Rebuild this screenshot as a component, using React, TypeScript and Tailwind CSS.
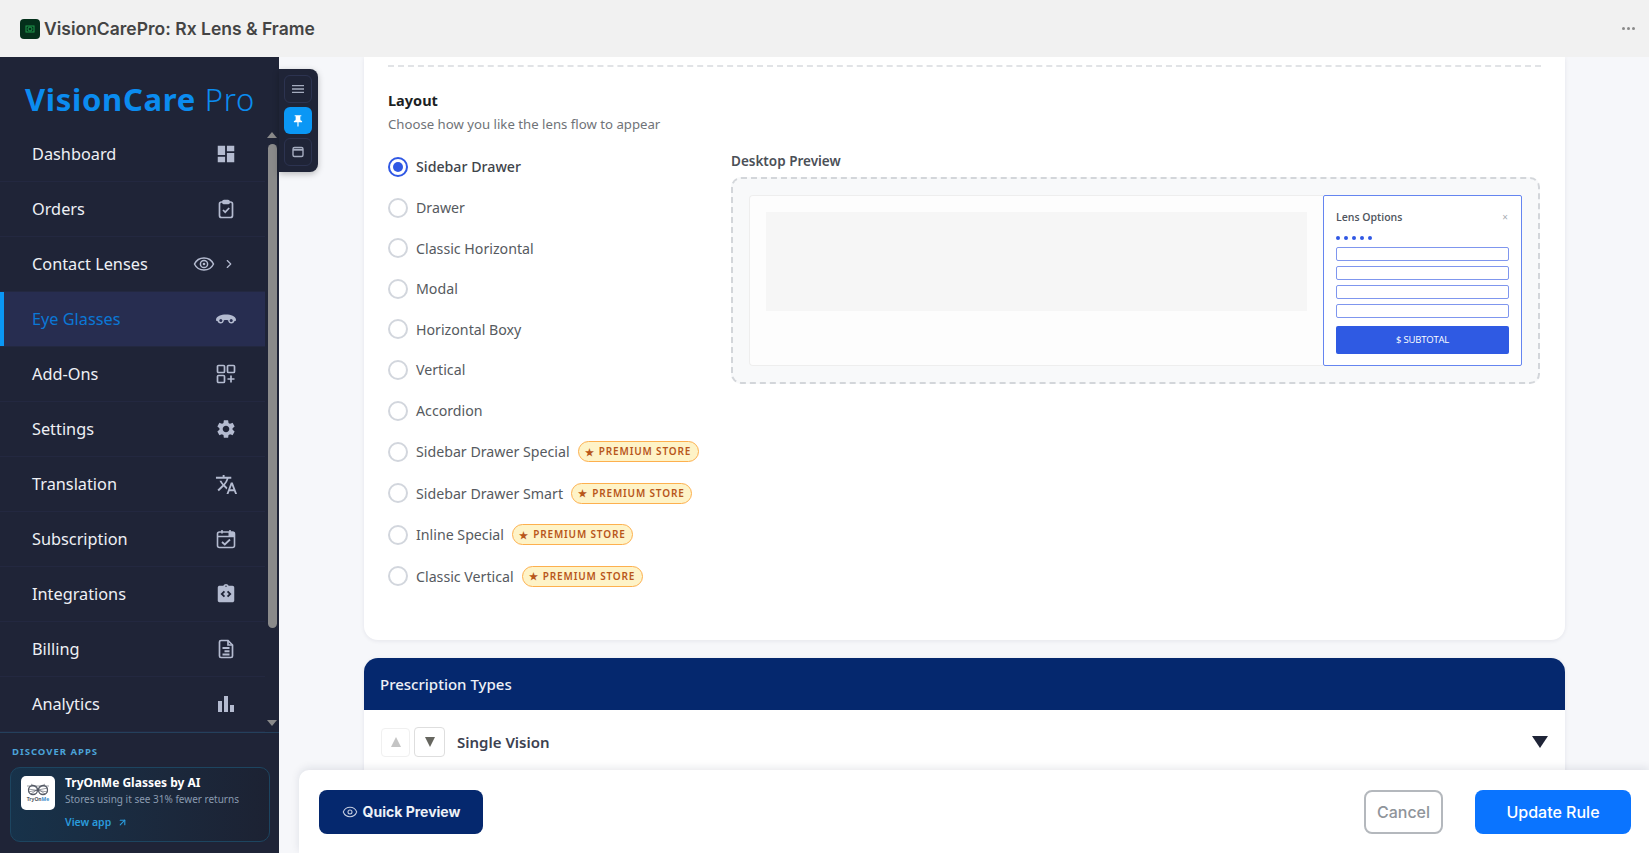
import React from 'react';
import { ChevronRight, Eye, ArrowUpRight } from 'lucide-react';
import { MdDashboard, MdSettings, MdTranslate, MdBarChart, MdPushPin, MdIntegrationInstructions, MdMenu } from 'react-icons/md';

// Icons that the packages do not have in the right shape
const ClipboardIcon = () => (
  <svg width="20" height="20" viewBox="0 0 20 20" fill="none" stroke="currentColor" strokeWidth="1.7">
    <rect x="3.5" y="3" width="13" height="15.5" rx="2" />
    <rect x="7" y="1.5" width="6" height="3" rx="1" fill="currentColor" />
    <path d="M7 11l2.2 2.2L13.2 9" />
  </svg>
);

const RingEyeIcon = () => (
  <svg width="22" height="22" viewBox="0 0 22 22" fill="none" stroke="currentColor" strokeWidth="1.5">
    <path d="M1.5 11C3.5 6.8 7 5 11 5s7.5 1.8 9.5 6c-2 4.2-5.5 6-9.5 6s-7.5-1.8-9.5-6z" />
    <circle cx="11" cy="11" r="3.6" />
    <circle cx="11" cy="11" r="1.3" fill="currentColor" stroke="none" />
  </svg>
);

const GlassesIcon = () => (
  <svg width="22" height="22" viewBox="0 0 22 22" fill="currentColor">
    <path d="M1 11.5C1.5 8 6 6.5 11 6.5s9.5 1.5 10 5l-.3 1.5h-1.2c-.3 1.5-1.5 2.5-3 2.5-1.8 0-3.2-1.2-3.3-3-.8-.6-3.6-.6-4.4 0-.1 1.8-1.5 3-3.3 3-1.5 0-2.7-1-3-2.5H1.3z" />
    <circle cx="5.8" cy="12.5" r="1.5" fill="#272d50" />
    <circle cx="16.2" cy="12.5" r="1.5" fill="#272d50" />
  </svg>
);

const AddOnsIcon = () => (
  <svg width="20" height="20" viewBox="0 0 20 20" fill="none" stroke="currentColor" strokeWidth="1.7">
    <rect x="1.5" y="1.5" width="7" height="7" rx="1" />
    <rect x="11.5" y="1.5" width="7" height="7" rx="1" />
    <rect x="1.5" y="11.5" width="7" height="7" rx="1" />
    <path d="M15 11.5v7M11.5 15h7" />
  </svg>
);

const CalendarIcon = () => (
  <svg width="20" height="20" viewBox="0 0 20 20" fill="none" stroke="currentColor" strokeWidth="1.6">
    <rect x="1.5" y="3" width="17" height="15.5" rx="2" />
    <path d="M1.5 7.5h17M6 1v3.5M14 1v3.5" />
    <path d="M12.5 3h6v4.5h-6z" fill="currentColor" stroke="none" />
    <path d="M6 13l2.8 2.5L14 10.5" strokeWidth="1.8" />
  </svg>
);

const BillingIcon = () => (
  <svg width="20" height="20" viewBox="0 0 20 20" fill="none" stroke="currentColor" strokeWidth="1.7">
    <path d="M3.5 3a1.5 1.5 0 0 1 1.5-1.5h7l4.5 4.5v11a1.5 1.5 0 0 1-1.5 1.5H5A1.5 1.5 0 0 1 3.5 17z" />
    <path d="M12 1.5V6h4.5" />
    <path d="M6.5 9h7M6.5 15.5h7M8.5 12.2h5" strokeWidth="1.9" />
  </svg>
);

const navItems = [
  { label: 'Dashboard', icon: <MdDashboard size={22} /> },
  { label: 'Orders', icon: <ClipboardIcon /> },
  { label: 'Contact Lenses', icon: null },
  { label: 'Eye Glasses', icon: <GlassesIcon />, active: true },
  { label: 'Add-Ons', icon: <AddOnsIcon /> },
  { label: 'Settings', icon: <MdSettings size={22} /> },
  { label: 'Translation', icon: <MdTranslate size={23} /> },
  { label: 'Subscription', icon: <CalendarIcon /> },
  { label: 'Integrations', icon: <MdIntegrationInstructions size={22} /> },
  { label: 'Billing', icon: <BillingIcon /> },
  { label: 'Analytics', icon: <MdBarChart size={24} /> },
];

const layouts = [
  { label: 'Sidebar Drawer', checked: true },
  { label: 'Drawer' },
  { label: 'Classic Horizontal' },
  { label: 'Modal' },
  { label: 'Horizontal Boxy' },
  { label: 'Vertical' },
  { label: 'Accordion' },
  { label: 'Sidebar Drawer Special', premium: true },
  { label: 'Sidebar Drawer Smart', premium: true },
  { label: 'Inline Special', premium: true },
  { label: 'Classic Vertical', premium: true },
];

const Sidebar: React.FC = () => (
  <aside className="relative flex w-[279px] shrink-0 flex-col bg-[#1f2437] font-['Noto_Sans',sans-serif]">
    <div className="flex h-[70px] items-center pt-[14px] pl-[25px]">
      <span className="text-[31px] leading-none font-bold tracking-[0.7px] text-[#0b8cf0]">
        VisionCare <span className="font-light">Pro</span>
      </span>
    </div>

    <nav className="relative h-[605px] pr-[14px]">
      {navItems.map(item => (
        <div
          key={item.label}
          className={`flex h-[55px] items-center justify-between border-b border-[#232840] pr-[27px] pl-[32px] ${
            item.active ? 'bg-[#272d50] shadow-[inset_4px_0_0_#0a97f5]' : ''
          }`}
        >
          <span className={`pt-[1px] text-[16.3px] ${item.active ? 'text-[#0b78d6]' : 'text-[#eef0f5]'}`}>{item.label}</span>
          {item.icon ? (
            <span className="flex w-[24px] items-center justify-center text-[#b4bbd0]">{item.icon}</span>
          ) : (
            <span className="mr-[2px] flex items-center gap-[7px] text-[#b4bbd0]">
              <RingEyeIcon />
              <ChevronRight size={14} strokeWidth={2} />
            </span>
          )}
        </div>
      ))}

      {/* fake scrollbar */}
      <div className="absolute top-0 right-[2px] bottom-0 flex w-[10px] flex-col items-center">
        <div className="mt-[5px] h-0 w-0 border-x-[5px] border-b-[6px] border-x-transparent border-b-[#8a8a8a]" />
        <div className="mt-[6px] h-[484px] w-[9px] rounded-[5px] bg-[#8a8a8a]" />
        <div className="mt-[92px] h-0 w-0 border-x-[5px] border-t-[6px] border-x-transparent border-t-[#8a8a8a]" />
      </div>
    </nav>

    <div className="flex-1 border-t border-[#24405c] px-[10px] pt-[12px]">
      <div className="pl-[2px] text-[9.5px] leading-[13px] font-bold tracking-[1px] text-[#4ba3d8]">DISCOVER APPS</div>
      <div className="mt-[9px] flex h-[75px] w-[260px] gap-[10px] rounded-[10px] border border-[#1d4560] bg-gradient-to-r from-[#17324a] to-[#1c2233] pt-[7px] pl-[10px]">
        <div className="mt-[1px] flex h-[34px] w-[34px] shrink-0 flex-col items-center justify-center rounded-[5px] bg-white">
          <svg width="24" height="13" viewBox="0 0 24 13" fill="none" stroke="#555b66" strokeWidth="1.3">
            <circle cx="7" cy="7" r="4.5" />
            <circle cx="17" cy="7" r="4.5" />
            <path d="M1 3l22 0M5 1l14 10M19 1L5 11M2 6l20 3M2 9l20-4" strokeWidth="0.6" />
          </svg>
          <span className="text-[5px] leading-[7px] font-bold text-[#555b66]">
            TryOn<span className="text-[#3b8ecb]">Me</span>
          </span>
        </div>
        <div className="min-w-0">
          <div className="text-[12px] leading-[16px] font-bold text-white">TryOnMe Glasses by AI</div>
          <div className="mt-[1px] text-[10px] leading-[15px] whitespace-nowrap text-[#8a9bb0]">Stores using it see 31% fewer returns</div>
          <div className="mt-[8px] flex items-center gap-[6px] text-[10.5px] leading-[15px] font-semibold text-[#2a9bdc]">
            View app <ArrowUpRight size={11} strokeWidth={2.4} />
          </div>
        </div>
      </div>
    </div>

    {/* pinned tool strip */}
    <div className="absolute top-[12px] left-full z-10 flex h-[103px] w-[39px] flex-col gap-[4px] rounded-r-[8px] bg-[#1f2437] py-[6px] pl-[5px] shadow-[0_2px_6px_rgba(0,0,0,0.25)]">
      <div className="flex h-[28px] w-[28px] items-center justify-center rounded-[6px] border border-[#2c3350] text-[#a5acbf]">
        <MdMenu size={16} />
      </div>
      <div className="flex h-[28px] w-[28px] items-center justify-center rounded-[6px] bg-[#0a97f5] text-white">
        <MdPushPin size={14} />
      </div>
      <div className="flex h-[28px] w-[28px] items-center justify-center rounded-[6px] border border-[#2c3350] text-[#a5acbf]">
        <svg width="14" height="14" viewBox="0 0 14 14" fill="none" stroke="currentColor" strokeWidth="1.4">
          <rect x="2" y="2.5" width="10" height="9" rx="1.5" />
          <path d="M2 4.8h10" strokeWidth="1.8" />
        </svg>
      </div>
    </div>
  </aside>
);

const Radio: React.FC<{ checked?: boolean }> = ({ checked }) => (
  <span
    className={`flex h-[20px] w-[20px] shrink-0 items-center justify-center rounded-full border-2 ${
      checked ? 'border-[#3058e4]' : 'border-[#d2d6dd]'
    }`}
  >
    {checked && <span className="h-[10px] w-[10px] rounded-full bg-[#3058e4]" />}
  </span>
);

const PremiumBadge = () => (
  <span className="ml-[8px] flex h-[21px] w-[121px] items-center justify-center gap-[4px] rounded-full border border-[#fdb04e] bg-[#fef3c7] text-[10px] font-semibold tracking-[0.85px] text-[#b8561a]">
    <span className="text-[10px] leading-none">★</span>PREMIUM STORE
  </span>
);

const LayoutPreview = () => (
  <div className="w-[809px] pt-[7px]">
    <div className="text-[13.5px] leading-[18px] font-semibold text-[#4b5057]">Desktop Preview</div>
    <div className="mt-[7px] flex h-[207px] rounded-[10px] border-2 border-dashed border-[#d3d6da] bg-[#f8f9fa] p-[16px]">
      <div className="flex flex-1 rounded-l-[4px] border border-r-0 border-[#eeeeee] bg-[#fdfdfd] p-[16px]">
        <div className="h-[99px] w-full bg-[#f6f6f6]" />
      </div>
      <div className="w-[199px] rounded-[2px] border-[1.5px] border-[#6585f0] bg-white px-[12px] pt-[12px] font-['Open_Sans',sans-serif]">
        <div className="flex items-center justify-between pr-[1px]">
          <span className="text-[10.5px] leading-[18px] font-semibold text-[#50555e]">Lens Options</span>
          <span className="text-[10px] leading-none text-[#a8acb3]">×</span>
        </div>
        <div className="mt-[10px] flex gap-[4px]">
          {[0, 1, 2, 3, 4].map(i => (
            <span key={i} className="h-[4px] w-[4px] rounded-full bg-[#3058e4]" />
          ))}
        </div>
        <div className="mt-[7px] flex flex-col gap-[5px]">
          {[0, 1, 2, 3].map(i => (
            <div key={i} className="h-[14px] rounded-[2px] border border-[#7f96ee] bg-white" />
          ))}
        </div>
        <div className="mt-[8px] flex h-[28px] items-center justify-center rounded-[2px] bg-[#2f5ae3] text-[9.5px] tracking-[-0.2px] text-white">
          $ SUBTOTAL
        </div>
      </div>
    </div>
  </div>
);

const App: React.FC = () => {
  return (
    <div className="flex h-screen w-full flex-col overflow-hidden bg-[#f6f7fa]">
      {/* Title bar */}
      <header className="flex h-[57px] shrink-0 items-center justify-between bg-[#f1f1f1] pr-[14px] pl-[20px] font-['Inter',sans-serif]">
        <div className="flex items-center gap-[4px]">
          <div className="flex h-[20px] w-[20px] items-center justify-center rounded-[4px] bg-[#04301b]">
            <svg width="12" height="12" viewBox="0 0 12 12" fill="none" stroke="#1f9a4c" strokeWidth="1">
              <rect x="2" y="3" width="8" height="6" />
              <circle cx="6" cy="6" r="2" />
            </svg>
          </div>
          <span className="pt-[2px] text-[17.5px] font-semibold text-[#444444]">VisionCarePro: Rx Lens &amp; Frame</span>
        </div>
        <span className="flex gap-[2px]">
          {[0, 1, 2].map(i => (
            <span key={i} className="h-[3px] w-[3px] rounded-full bg-[#8a8a8a]" />
          ))}
        </span>
      </header>

      <div className="relative flex min-h-0 flex-1">
        <Sidebar />

        <main className="min-w-0 flex-1 overflow-hidden pr-[84px] pl-[85px] font-['Noto_Sans',sans-serif]">
          {/* Layout card, scrolled so its top is cut off */}
          <section className="h-[583px] rounded-b-[14px] bg-white px-[24px] pt-[8px] shadow-[0_1px_4px_rgba(20,30,60,0.08)]">
            <div className="border-t-2 border-dashed border-[#e1e3e6]" />
            <h2 className="mt-[23px] text-[14.5px] leading-[20px] font-bold text-[#1c1f24]">Layout</h2>
            <p className="mt-[5px] text-[13.2px] leading-[18px] text-[#6f7378]">Choose how you like the lens flow to appear</p>

            <div className="mt-[12px] flex">
              <div className="flex w-[343px] shrink-0 flex-col gap-[20.6px] pt-[12px]">
                {layouts.map(l => (
                  <label key={l.label} className={`flex items-center ${l.premium ? 'h-[21px]' : 'h-[20px]'}`}>
                    <Radio checked={l.checked} />
                    <span className={`ml-[8px] whitespace-nowrap text-[14.2px] ${l.checked ? 'font-medium text-[#40444a]' : 'text-[#565a60]'}`}>
                      {l.label}
                    </span>
                    {l.premium && <PremiumBadge />}
                  </label>
                ))}
              </div>
              <LayoutPreview />
            </div>
          </section>

          {/* Prescription types, runs on under the action bar */}
          <section className="mt-[18px] rounded-[14px] bg-white shadow-[0_1px_4px_rgba(20,30,60,0.08)]">
            <div className="flex h-[52px] items-center rounded-t-[14px] bg-[#05286e] pl-[16px] text-[15px] font-medium text-[#eef1f7]">
              Prescription Types
            </div>
            <div className="h-[100px] px-[17px] pt-[17px]">
              <div className="flex h-[30px] items-center">
                <span className="flex h-[29px] w-[29px] items-center justify-center rounded-[4px] border border-[#f0f0f0]">
                  <span className="h-0 w-0 border-x-[5.5px] border-b-[10px] border-x-transparent border-b-[#c4c4c4]" />
                </span>
                <span className="ml-[4px] flex h-[30px] w-[31px] items-center justify-center rounded-[4px] border border-[#dedede]">
                  <span className="h-0 w-0 border-x-[5.5px] border-t-[10px] border-x-transparent border-t-[#66665f]" />
                </span>
                <span className="ml-[12px] text-[15px] font-semibold text-[#3c4150]">Single Vision</span>
                <span className="ml-auto h-0 w-0 border-x-[8px] border-t-[12px] border-x-transparent border-t-[#1f2437]" />
              </div>
            </div>
          </section>
        </main>

        {/* Sticky action bar */}
        <div className="absolute right-0 bottom-0 left-[299px] z-20 flex h-[83px] items-center justify-between rounded-tl-[10px] bg-white pr-[18px] pl-[20px] font-['Inter',sans-serif] shadow-[0_-2px_8px_rgba(20,30,60,0.1)]">
          <button className="flex h-[44px] w-[164px] items-center justify-center gap-[5px] rounded-[8px] bg-[#05286e] text-[14px] font-bold text-[#eef1f7]">
            <Eye size={16} strokeWidth={1.6} className="text-[#c5cde0]" />
            Quick Preview
          </button>
          <div className="flex items-center gap-[32px]">
            <button className="h-[44px] w-[79px] rounded-[8px] border-2 border-[#b4b8bd] text-[16px] font-medium text-[#8f949a]">Cancel</button>
            <button className="h-[44px] w-[156px] rounded-[8px] bg-[#0a74ff] text-[16px] font-medium text-white">Update Rule</button>
          </div>
        </div>
      </div>
    </div>
  );
};

export default App;
